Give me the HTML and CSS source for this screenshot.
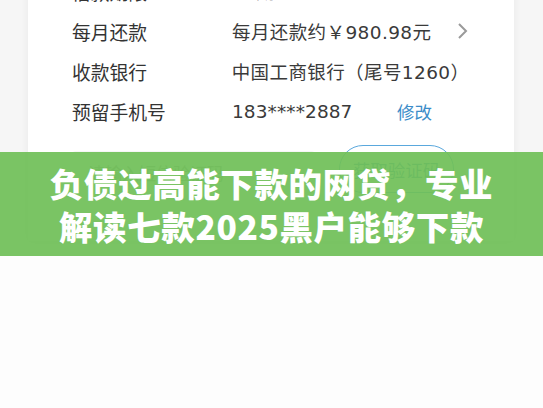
FILE: index.html
```html
<!doctype html>
<html>
<head>
  <link rel="stylesheet" href="styles.css">
</head>
<body>
  <div class="shot">
    <div class="card">
      <div class="row">
        <span class="label">借款期限</span>
        <span class="value">12期</span>
      </div>
      <div class="row">
        <span class="label">每月还款</span>
        <span class="value">每月还款约￥980.98元</span>
        <svg class="chev" width="12" height="18" viewBox="0 0 12 18"><path d="M2 2 L9 9 L2 16" fill="none" stroke="#9a9a9a" stroke-width="2"/></svg>
      </div>
      <div class="row">
        <span class="label">收款银行</span>
        <span class="value">中国工商银行（尾号1260）</span>
      </div>
      <div class="row">
        <span class="label">预留手机号</span>
        <span class="value phone">183****2887</span>
        <a class="edit" href="#">修改</a>
      </div>
      <div class="code-row">
        <div class="code-input">请输入短信验证码</div>
        <button class="code-btn">获取验证码</button>
      </div>
    </div>

    <div class="banner">
      <h1>负债过高能下款的网贷，专业<br>解读七款2025黑户能够下款</h1>
    </div>
  </div>
  <div class="blank"></div>
</body>
</html>
```

FILE: styles.css
```css
* {
  margin: 0;
  padding: 0;
  box-sizing: border-box;
  font-family: "Noto Sans CJK SC", "Noto Sans", sans-serif;
}

body {
  background: #fdfdfd;
  overflow: hidden;
}

.shot {
  position: relative;
  height: 256px;
  overflow: hidden;
  background: #f6f6f6;
}

.card {
  margin: -29px 0 0 28px;
  width: 486px;
  height: 270px;
  background: #fff;
  box-shadow: 0 0 8px rgba(0,0,0,0.06);
  padding: 0 45px 0 44px;
}

.row {
  display: flex;
  align-items: center;
  height: 40px;
  font-size: 18.8px;
  color: #333;
}

.label {
  width: 160px;
}

.value {
  color: #3a3a3a;
  font-family: "DejaVu Sans", "Noto Sans CJK SC", sans-serif;
  font-size: 18.5px;
  letter-spacing: 0.4px;
}

.chev {
  margin-left: auto;
}

.phone {
  width: 165px;
  letter-spacing: 0.1px;
}

.edit {
  color: #3b8dc9;
  text-decoration: none;
  font-size: 17.5px;
}

.code-row {
  display: flex;
  align-items: flex-start;
  margin-top: 14px;
}

.code-input {
  width: 243px;
  height: 42px;
  margin-top: 6px;
  background: #f6f6f6;
  border-radius: 4px;
  padding-left: 16px;
  display: flex;
  align-items: center;
  font-size: 17px;
  color: #9a9a9a;
}

.code-btn {
  margin-left: 24px;
  width: 115px;
  height: 48px;
  border: 1.5px solid #5aa8dd;
  border-radius: 24px;
  background: #fff;
  color: #3b8dc9;
  font-size: 17.5px;
}

.banner {
  position: absolute;
  left: 0;
  right: 0;
  top: 152px;
  height: 104px;
  background: rgba(112, 192, 88, 0.93);
  display: flex;
  align-items: center;
  justify-content: center;
}

.banner h1 {
  color: #fff;
  font-size: 33.5px;
  font-weight: 900;
  line-height: 43px;
  text-align: center;
  letter-spacing: 0.6px;
}

.blank {
  height: 152px;
  background: #fdfdfd;
}
```
